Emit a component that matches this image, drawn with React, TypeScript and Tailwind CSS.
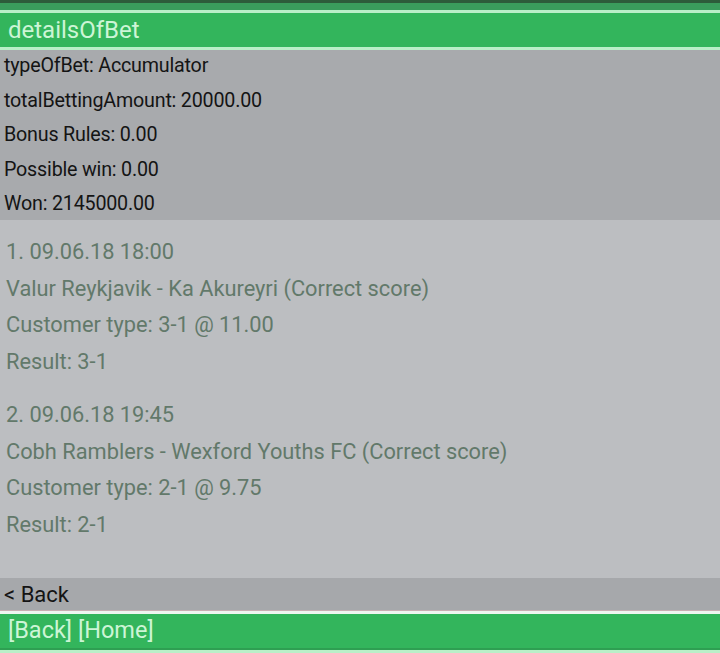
import React from "react";

const font = { fontFamily: "Roboto, 'Noto Sans', sans-serif" };

export default function App() {
  const info = [
    "typeOfBet: Accumulator",
    "totalBettingAmount: 20000.00",
    "Bonus Rules: 0.00",
    "Possible win: 0.00",
    "Won: 2145000.00",
  ];
  const bets = [
    [
      "1. 09.06.18 18:00",
      "Valur Reykjavik - Ka Akureyri (Correct score)",
      "Customer type: 3-1 @ 11.00",
      "Result: 3-1",
    ],
    [
      "2. 09.06.18 19:45",
      "Cobh Ramblers - Wexford Youths FC (Correct score)",
      "Customer type: 2-1 @ 9.75",
      "Result: 2-1",
    ],
  ];
  return (
    <div className="w-[720px] h-[653px] overflow-hidden bg-[#bcbec1]" style={font}>
      <div className="h-[3px] bg-[#2d5b3a]" />
      <div className="h-[7px] bg-[#3a9c5c]" />
      <div className="h-[3px] bg-[#b9efc8]" />
      <div className="h-[34px] bg-[#33b55c] flex items-center pl-[8px] text-[24px] text-[#cdf5d6]">
        detailsOfBet
      </div>
      <div className="h-[3px] bg-[#b9efc8]" />
      <div className="bg-[#a8aaad] h-[170px] overflow-hidden">
        <div className="flex flex-col -mt-[1px]">
          {info.map((t) => (
            <div key={t} className="h-[34.5px] shrink-0 flex items-center pl-[4px] text-[19.7px] tracking-[-0.2px] text-[#141414]">
              {t}
            </div>
          ))}
        </div>
      </div>
      <div className="bg-[#bcbec1] h-[358px] pt-[14px] pl-[6px] flex flex-col gap-[17px]">
        {bets.map((g, i) => (
          <div key={i} className="flex flex-col">
            {g.map((t) => (
              <div key={t} className="leading-[36.5px] text-[21.8px] text-[#62796a]">
                {t}
              </div>
            ))}
          </div>
        ))}
      </div>
      <div className="h-[32px] bg-[#a6a8ab] flex items-center pl-[4px] text-[22px] text-[#141414]">
        &lt; Back
      </div>
      <div className="h-[1px] bg-[#c9aeb2]" />
      <div className="h-[3px] bg-[#eef6f0]" />
      <div className="h-[34px] bg-[#33b55c] flex items-center pl-[8px] text-[23.5px] text-[#cdf5d6]">
        [Back] [Home]
      </div>
      <div className="h-[2px] bg-[#2e9f52]" />
      <div className="h-[3px] bg-[#b9efc8]" />
    </div>
  );
}
